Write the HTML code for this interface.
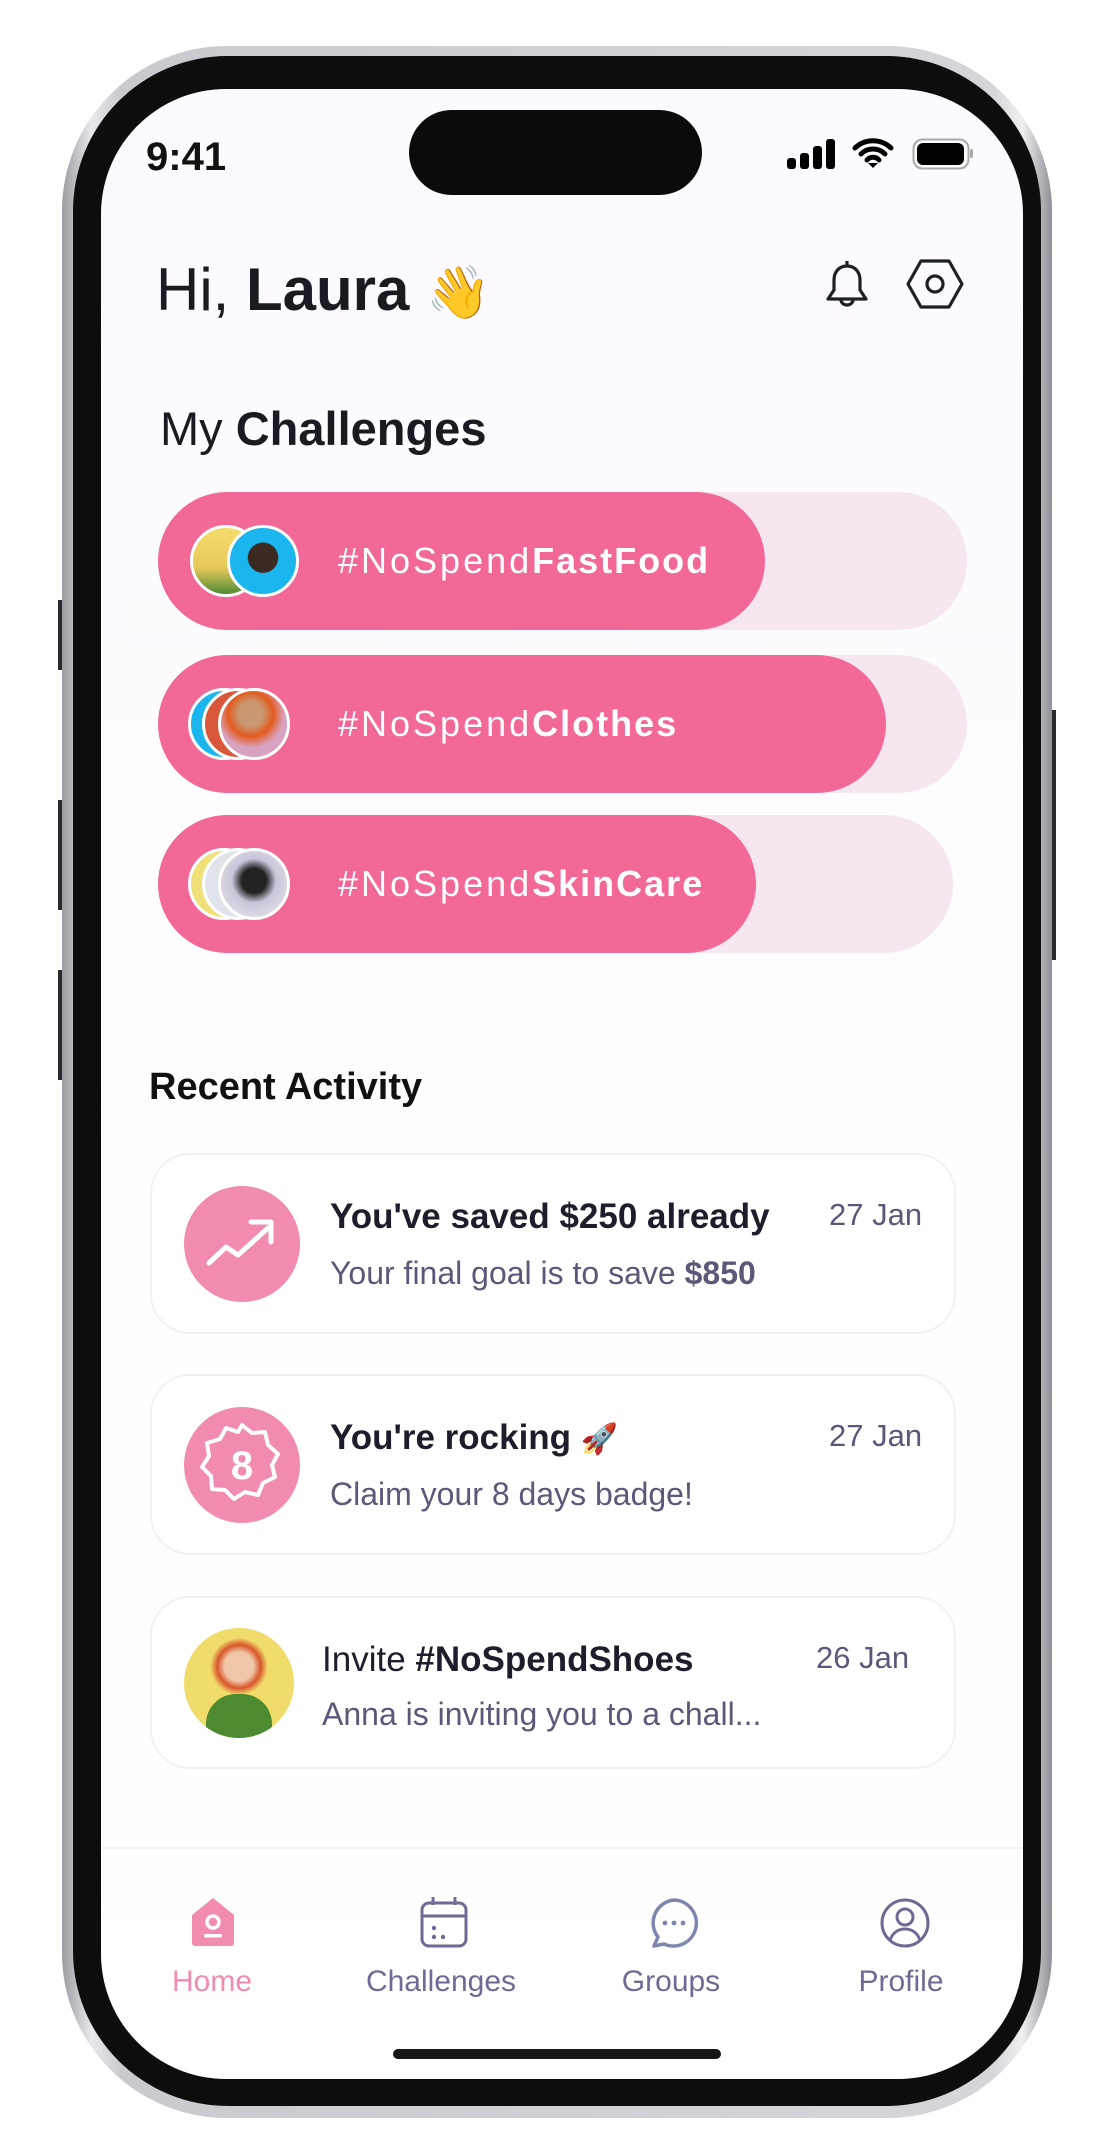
<!DOCTYPE html>
<html><head><meta charset="utf-8"><style>
*{margin:0;padding:0;box-sizing:border-box}
body{width:1101px;height:2155px;background:#fff;position:relative;overflow:hidden;font-family:"Liberation Sans",sans-serif}
.abs{position:absolute}
.frame{left:62px;top:46px;width:990px;height:2072px;border-radius:165px;background:linear-gradient(90deg,#9a9ca2,#e8e9ec 3%,#c9cacf 6%,#d5d6da 94%,#f0f0f2 97%,#8e9096);}
.bezel{left:73px;top:56px;width:968px;height:2050px;border-radius:155px;background:#0d0d0d}
.screen{left:101px;top:89px;width:922px;height:1990px;border-radius:125px;background:linear-gradient(#fbfaff,#fdfcff 40%,#fff);overflow:hidden}
.btn{background:#2a2a2c;width:6px}
.pill{left:57px;height:138px;border-radius:69px;background:#f6e6ef}
.fg{left:0;top:0;height:100%;border-radius:69px;background:#f26896}
.ptxt{position:absolute;left:180px;top:0;line-height:138px;color:#fff;font-size:36px;letter-spacing:3px}
.ptxt b{letter-spacing:2px}
.av{position:absolute;width:72px;height:72px;border-radius:50%;border:3px solid #fff;top:33px}
.card{left:49px;width:806px;border-radius:40px;background:#fff;border:2px solid #f1f0f7}
.ic{position:absolute;left:32px;width:116px;height:116px;border-radius:50%;background:#f28bb0}
.t{position:absolute;font-size:35px;font-weight:bold;color:#1f1d2b}
.s{position:absolute;font-size:32px;color:#5b5878}
.d{position:absolute;font-size:31px;color:#5b5878}
.nl{position:absolute;top:1876px;font-size:30px;color:#6e6a94;transform:translateX(-50%)}
</style></head><body>
<div class="abs btn" style="left:58px;top:970px;height:110px"></div>
<div class="abs btn" style="left:58px;top:800px;height:110px"></div>
<div class="abs btn" style="left:58px;top:600px;height:70px"></div>
<div class="abs btn" style="left:1050px;top:710px;height:250px"></div>
<div class="abs frame"></div>
<div class="abs bezel"></div>
<div class="abs screen">
  <div class="abs" style="left:45px;top:46px;font-size:40px;font-weight:bold;color:#111">9:41</div>
  <div class="abs" style="left:308px;top:21px;width:293px;height:85px;border-radius:43px;background:#0b0b0b"></div>
  <svg class="abs" style="left:686px;top:50px" width="50" height="30"><rect x="0" y="19" width="9" height="11" rx="3"/><rect x="13" y="14" width="9" height="16" rx="3"/><rect x="26" y="7" width="9" height="23" rx="3"/><rect x="39" y="0" width="9" height="30" rx="3"/></svg>
  <svg class="abs" style="left:751px;top:48px" width="42" height="32" viewBox="0 0 42 32"><path d="M3 11a26 26 0 0 1 36 0M9 17a17 17 0 0 1 24 0M15 23a8 8 0 0 1 12 0" stroke="#000" stroke-width="5" fill="none" stroke-linecap="round"/><path d="M16 26l5 5 5-5z"/></svg>
  <svg class="abs" style="left:811px;top:49px" width="62" height="32"><rect x="1.5" y="1.5" width="55" height="29" rx="9" fill="none" stroke="#aaa" stroke-width="2"/><rect x="5" y="5" width="47" height="22" rx="6"/><rect x="58" y="11" width="3" height="9" rx="1.5" fill="#aaa"/></svg>
  <div class="abs" style="left:55px;top:166px;font-size:60px;color:#1a1a22">Hi, <b>Laura</b> <span style="font-size:52px">👋</span></div>
  <svg class="abs" style="left:723px;top:170px" width="46" height="50" viewBox="0 0 46 50"><path d="M23 2v5M23 7c-8 0-13 6-13 14v10l-6 9h38l-6-9V21c0-8-5-14-13-14zM17 41a6 5 0 0 0 12 0" fill="none" stroke="#1f1f28" stroke-width="3.2" stroke-linejoin="round"/></svg>
  <svg class="abs" style="left:805px;top:170px" width="58" height="50" viewBox="0 0 58 50"><path d="M15 2h28l13 23-13 23H15L2 25z" fill="none" stroke="#1f1f28" stroke-width="3.2" stroke-linejoin="round"/><circle cx="29" cy="25" r="8" fill="none" stroke="#1f1f28" stroke-width="3.2"/></svg>
  <div class="abs" style="left:59px;top:312px;font-size:47px;color:#1a1a22">My <b>Challenges</b></div>

  <div class="abs pill" style="top:403px;width:809px"><div class="abs fg" style="width:607px"></div>
    <div class="av" style="left:32px;background:linear-gradient(#f4dd6b,#e8c95a 60%,#4f8a33)"></div>
    <div class="av" style="left:69px;background:radial-gradient(circle at 50% 45%,#3b2a22 30%,#1cb6ee 32%)"></div>
    <div class="ptxt">#NoSpend<b>FastFood</b></div></div>
  <div class="abs pill" style="top:566px;width:809px"><div class="abs fg" style="width:728px"></div>
    <div class="av" style="left:30px;background:#1cb6ee"></div>
    <div class="av" style="left:44px;background:#d9573a"></div>
    <div class="av" style="left:60px;background:radial-gradient(circle at 45% 35%,#c99770 22%,#e35b1f 40%,#d8a3c0 60%)"></div>
    <div class="ptxt">#NoSpend<b>Clothes</b></div></div>
  <div class="abs pill" style="top:726px;width:795px"><div class="abs fg" style="width:598px"></div>
    <div class="av" style="left:30px;background:#efe07a"></div>
    <div class="av" style="left:44px;background:#dfe4ea"></div>
    <div class="av" style="left:60px;background:radial-gradient(circle at 50% 45%,#222 25%,#c9c4d8 45%,#eee)"></div>
    <div class="ptxt">#NoSpend<b>SkinCare</b></div></div>

  <div class="abs" style="left:48px;top:977px;font-size:38px;font-weight:bold;color:#111">Recent Activity</div>

  <div class="abs card" style="top:1064px;height:181px">
    <div class="ic" style="top:31px"><svg width="116" height="116" viewBox="0 0 116 116"><path d="M25 77l17-16 12 8 30-27M67 36h20v20" fill="none" stroke="#fff" stroke-width="5" stroke-linecap="round" stroke-linejoin="round"/></svg></div>
    <div class="t" style="left:178px;top:42px">You've saved $250 already</div>
    <div class="s" style="left:178px;top:100px">Your final goal is to save <b>$850</b></div>
    <div class="d" style="left:677px;top:42px">27 Jan</div>
  </div>
  <div class="abs card" style="top:1285px;height:181px">
    <div class="ic" style="top:31px"><svg width="116" height="116" viewBox="0 0 116 116"><path d="M58 18l10 8 13-1 3 13 10 9-6 11 3 12-12 6-5 12-13-3-11 7-9-9-13-1-1-13-9-9 7-11-2-13 13-4 6-11 12 4z" fill="none" stroke="#fff" stroke-width="4" stroke-linejoin="round"/><text x="58" y="72" text-anchor="middle" font-family="Liberation Sans" font-weight="bold" font-size="40" fill="#fff">8</text></svg></div>
    <div class="t" style="left:178px;top:42px">You're rocking <span style="font-size:30px">🚀</span></div>
    <div class="s" style="left:178px;top:100px">Claim your 8 days badge!</div>
    <div class="d" style="left:677px;top:42px">27 Jan</div>
  </div>
  <div class="abs card" style="top:1507px;height:173px">
    <div class="ic" style="top:30px;width:110px;height:110px;background:radial-gradient(circle at 50% 35%,#f0c7a8 16%,#d8562b 24%,#f0dc6b 32%);overflow:hidden"><div style="position:absolute;left:22px;top:66px;width:66px;height:60px;border-radius:30px 30px 0 0;background:#4e8a2f"></div></div>
    <div class="t" style="left:170px;top:42px;font-weight:normal">Invite <b>#NoSpendShoes</b></div>
    <div class="s" style="left:170px;top:98px">Anna is inviting you to a chall...</div>
    <div class="d" style="left:664px;top:42px">26 Jan</div>
  </div>

  <div class="abs" style="left:0;top:1758px;width:922px;height:2px;background:#f3f2fa"></div>
  <svg class="abs" style="left:88px;top:1808px" width="48" height="50" viewBox="0 0 48 50"><path d="M24 1L3 18v28a3 3 0 0 0 3 3h36a3 3 0 0 0 3-3V18z" fill="#f28bb0"/><circle cx="24" cy="25" r="6" fill="none" stroke="#fff" stroke-width="3.5"/><rect x="15" y="37" width="18" height="3.5" rx="1.5" fill="#fff"/></svg>
  <svg class="abs" style="left:318px;top:1806px" width="50" height="54" viewBox="0 0 50 54"><rect x="3" y="8" width="44" height="43" rx="7" fill="none" stroke="#6e6a94" stroke-width="3"/><path d="M14 2v8M36 2v8M3 21h44" stroke="#6e6a94" stroke-width="3"/><circle cx="15" cy="33" r="2.2" fill="#6e6a94"/><circle cx="15" cy="42" r="2.2" fill="#6e6a94"/><circle cx="24" cy="42" r="2.2" fill="#6e6a94"/></svg>
  <svg class="abs" style="left:547px;top:1808px" width="52" height="52" viewBox="0 0 52 52"><path d="M26 3a23 23 0 1 1-10 44l-10 2 4-9A23 23 0 0 1 26 3z" fill="none" stroke="#7f86ad" stroke-width="3.5" stroke-linejoin="round"/><circle cx="17" cy="26" r="2.4" fill="#7f86ad"/><circle cx="26" cy="26" r="2.4" fill="#7f86ad"/><circle cx="35" cy="26" r="2.4" fill="#7f86ad"/></svg>
  <svg class="abs" style="left:778px;top:1808px" width="52" height="52" viewBox="0 0 52 52"><circle cx="26" cy="26" r="23" fill="none" stroke="#6e6a94" stroke-width="3"/><circle cx="26" cy="20" r="8" fill="none" stroke="#6e6a94" stroke-width="3"/><path d="M11 43c3-8 9-11 15-11s12 3 15 11" fill="none" stroke="#6e6a94" stroke-width="3"/></svg>
  <div class="nl" style="left:111px;color:#f28bb0">Home</div>
  <div class="nl" style="left:340px">Challenges</div>
  <div class="nl" style="left:570px">Groups</div>
  <div class="nl" style="left:800px">Profile</div>
  <div class="abs" style="left:292px;top:1960px;width:328px;height:10px;border-radius:5px;background:#161616"></div>
</div>
</body></html>
